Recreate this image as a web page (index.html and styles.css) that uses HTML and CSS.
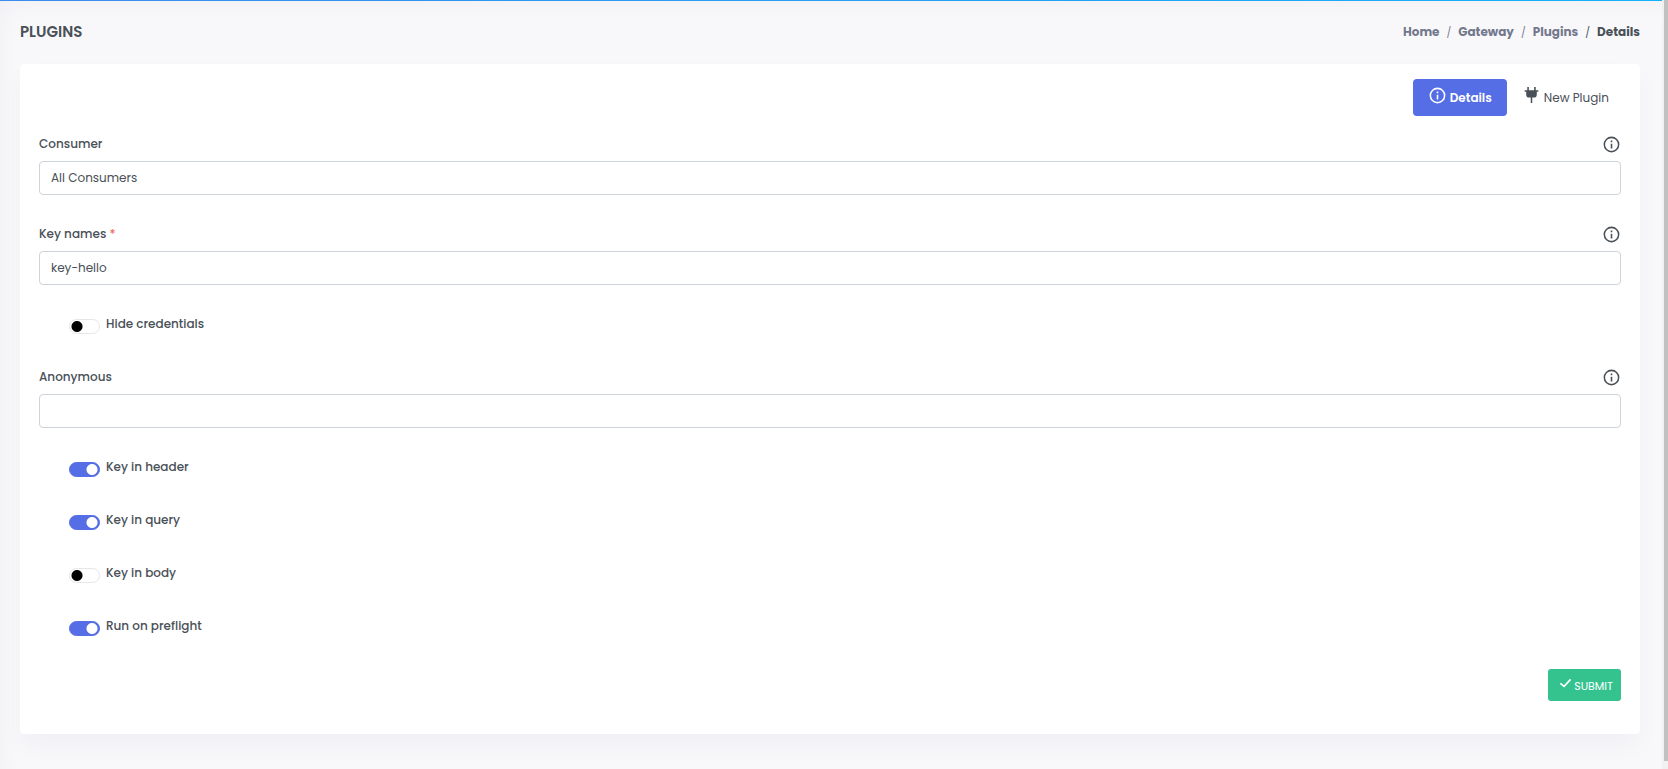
FILE: index.html
```html
<!DOCTYPE html>
<html lang="en">

<head>
    <meta charset="UTF-8">
    <title>Plugins</title>
    <link rel="stylesheet" href="styles.css">
</head>

<body>
    <svg class="sprite" aria-hidden="true">
        <symbol id="icon-info" viewBox="0 0 24 24">
            <path d="M11 9h2V7h-2m1 13c-4.41 0-8-3.59-8-8s3.59-8 8-8 8 3.59 8 8-3.59 8-8 8m0-18A10 10 0 0 0 2 12a10 10 0 0 0 10 10 10 10 0 0 0 10-10A10 10 0 0 0 12 2m-1 15h2v-6h-2v6z" />
        </symbol>
        <symbol id="icon-plug" viewBox="0 0 18 18">
            <path d="M5 1h1.500v3h5V1H13v3h2.500v1.500H14V8c0 2-1 3-3 3H9.700v5H8.300v-5H7c-2 0-3-1-3-3V5.500H2.500V4H5z" />
        </symbol>
        <symbol id="icon-check" viewBox="0 0 24 24">
            <path d="M22.500 5.500 9.600 19.500 1.500 13l2-2.500 5.700 4.500L20.200 3.300z" />
        </symbol>
    </svg>

    <main class="page">
        <header class="page-title">
            <h4>Plugins</h4>
            <nav>
                <ol class="breadcrumb">
                    <li><a href="#">Home</a></li>
                    <li><a href="#">Gateway</a></li>
                    <li><a href="#">Plugins</a></li>
                    <li class="active">Details</li>
                </ol>
            </nav>
        </header>

        <section class="card">
            <nav class="tabs">
                <a href="#" class="tab active"><svg class="icon"><use href="#icon-info" /></svg>Details</a>
                <a href="#" class="tab"><svg class="icon"><use href="#icon-plug" /></svg>New Plugin</a>
            </nav>

            <form class="plugin-form">
                <div class="field">
                    <div class="field-head">
                        <label for="consumer">Consumer</label>
                        <svg class="icon"><use href="#icon-info" /></svg>
                    </div>
                    <input type="text" id="consumer" value="All Consumers">
                </div>
                <div class="field">
                    <div class="field-head">
                        <label for="keyNames">Key names <span class="required">*</span></label>
                        <svg class="icon"><use href="#icon-info" /></svg>
                    </div>
                    <input type="text" id="keyNames" value="key-hello">
                </div>
                <div class="switch">
                    <input type="checkbox" id="hideCredentials">
                    <label for="hideCredentials">Hide credentials</label>
                </div>
                <div class="field">
                    <div class="field-head">
                        <label for="anonymous">Anonymous</label>
                        <svg class="icon"><use href="#icon-info" /></svg>
                    </div>
                    <input type="text" id="anonymous">
                </div>
                <div class="switch">
                    <input type="checkbox" id="keyInHeader" checked>
                    <label for="keyInHeader">Key in header</label>
                </div>
                <div class="switch">
                    <input type="checkbox" id="keyInQuery" checked>
                    <label for="keyInQuery">Key in query</label>
                </div>
                <div class="switch">
                    <input type="checkbox" id="keyInBody">
                    <label for="keyInBody">Key in body</label>
                </div>
                <div class="switch">
                    <input type="checkbox" id="runOnPreflight" checked>
                    <label for="runOnPreflight">Run on preflight</label>
                </div>
                <button type="submit" class="submit"><svg class="icon"><use href="#icon-check" /></svg>SUBMIT</button>
            </form>
        </section>
    </main>
    <div class="scrollbar">
        <div class="thumb"></div>
    </div>
</body>

</html>
```
FILE: styles.css
```css
* {
    box-sizing: border-box;
    margin: 0;
    padding: 0;
}

body {
    display: flex;
    min-height: 100vh;
    background: #f8f8fb;
    color: #495057;
    font-family: Poppins, Inter, sans-serif;
    font-size: 12px;
    line-height: 20px;
}

a {
    color: inherit;
    text-decoration: none;
}

.sprite {
    display: none;
}

.icon {
    width: 19px;
    height: 19px;
    fill: currentColor;
}

.page {
    flex: 1;
    padding: 0 22px 34px 20px;
    border-top: 1px solid;
    border-image: linear-gradient(90deg, #3b8bee, #14b1f9) 1;
    box-shadow: inset 12px 12px 24px -12px rgba(18, 38, 63, 0.04);
}

/* page title */
.page-title {
    display: flex;
    align-items: center;
    justify-content: space-between;
    height: 63px;
    padding-bottom: 1px;
}

.page-title h4 {
    font-size: 15px;
    font-weight: 600;
    text-transform: uppercase;
}

.breadcrumb {
    display: flex;
    list-style: none;
    color: #74788d;
    font-weight: 700;
}

.breadcrumb li + li::before {
    content: "/";
    padding: 0 7px;
    font-size: 10px;
    font-weight: 400;
}

.breadcrumb .active {
    color: #495057;
}

/* card */
.card {
    padding: 15px 19px 33px;
    background: #fff;
    border-radius: 4px;
    box-shadow: 0 12px 24px rgba(18, 38, 63, 0.03);
}

.tabs {
    display: flex;
    justify-content: flex-end;
    margin-bottom: 18px;
}

.tab {
    display: flex;
    gap: 3px;
    padding: 9px 12px 9px 15px;
    border-radius: 4px;
    line-height: 19px;
}

.tab .icon {
    margin-top: -2px;
}

.tab.active {
    padding-right: 15px;
    background: #556ee6;
    color: #fff;
    font-weight: 600;
}

.plugin-form {
    display: flex;
    flex-direction: column;
    gap: 29px;
}

.field-head {
    display: flex;
    align-items: center;
    justify-content: space-between;
    height: 20px;
    margin-bottom: 7px;
    font-weight: 500;
}

.required {
    color: #f46a6a;
}

.field input {
    display: block;
    width: 100%;
    height: 34px;
    padding: 0 11px;
    border: 1px solid #ced4da;
    border-radius: 4px;
    background: #fff;
    color: #495057;
    font: inherit;
}

/* switches */
.switch {
    display: flex;
    gap: 6px;
    height: 24px;
    padding-left: 30px;
    font-weight: 500;
}

.switch input {
    appearance: none;
    width: 31px;
    height: 15px;
    margin-top: 5px;
    border: 1px solid #e6e6e9;
    border-radius: 8px;
    background: #fff radial-gradient(circle at 7px 50%, #000 5px, transparent 6px);
}

.switch input:checked {
    border-color: #556ee6;
    background: #556ee6 radial-gradient(circle at 22px 50%, #fff 5px, transparent 6px);
}

.submit {
    display: flex;
    align-items: center;
    align-self: flex-end;
    gap: 2px;
    height: 32px;
    padding: 1px 8px 0 11px;
    border: 0;
    border-radius: 3px;
    background: #34c38f;
    color: #fff;
    font: 400 11px/20px Poppins, Inter, sans-serif;
}

.submit .icon {
    width: 13px;
    height: 13px;
    margin-bottom: 4px;
}

/* scrollbar */
.scrollbar {
    display: flex;
    width: 6px;
    padding: 0 0 8px 2px;
    background: #f1f1f1;
}

.thumb {
    flex: 1;
    background: #c1c1c1;
}
```
